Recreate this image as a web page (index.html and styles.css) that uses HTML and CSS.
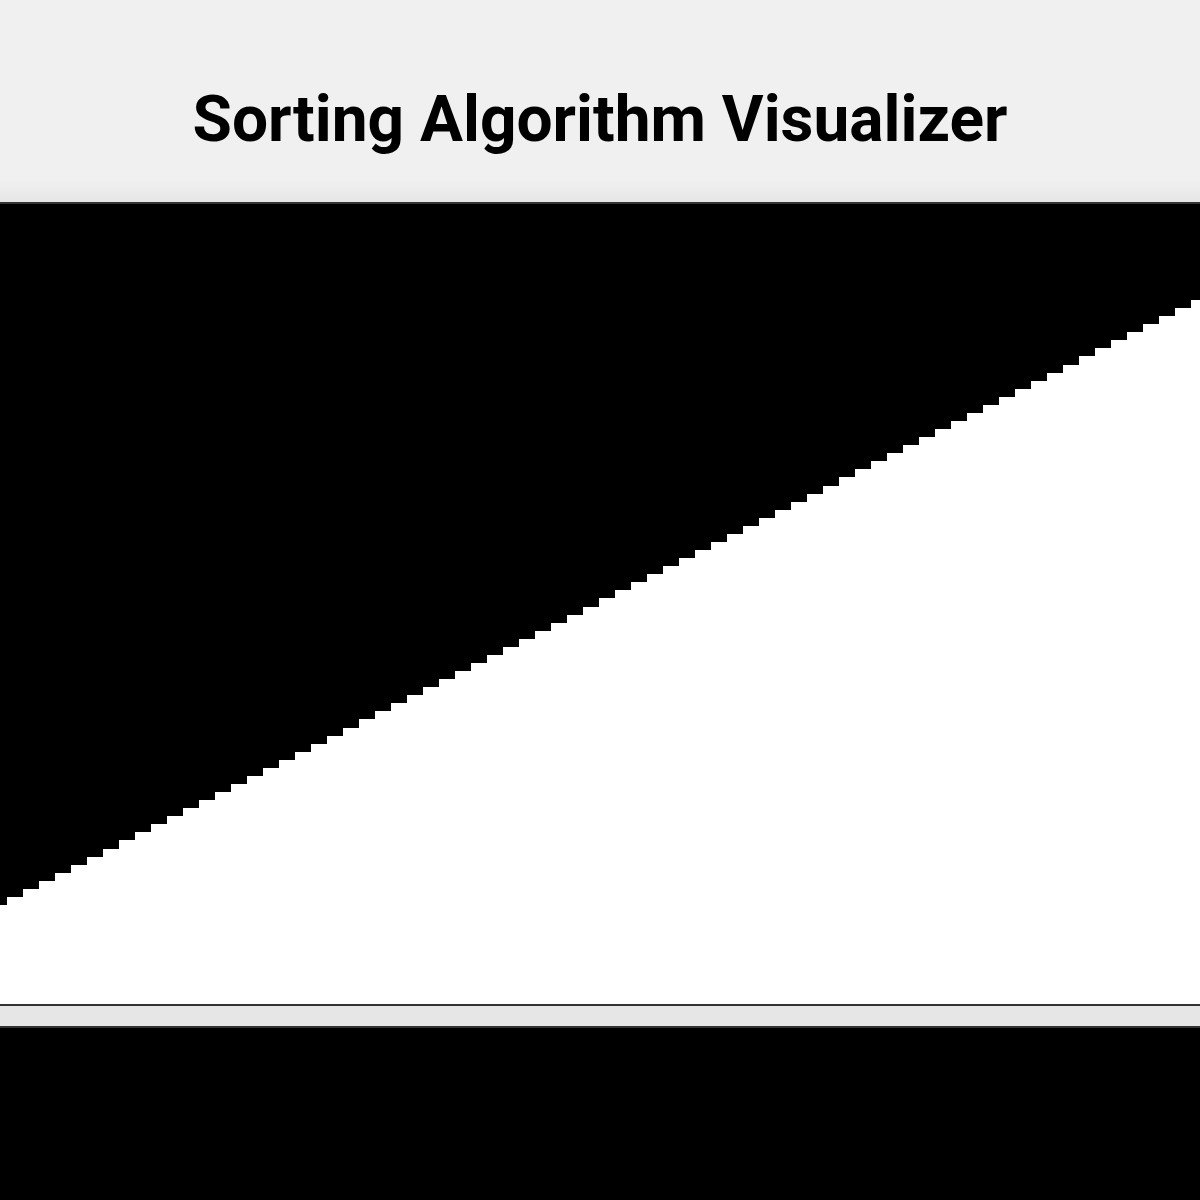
FILE: index.html
```html
<!DOCTYPE html>
<html lang="en">
<head>
<meta charset="utf-8">
<title>Sorting Algorithm Visualizer</title>
<link rel="stylesheet" href="styles.css">
</head>
<body>
<header class="header">
  <h1 class="title">Sorting Algorithm Visualizer</h1>
</header>
<main class="stage">
  <div class="bars">
    <div class="bar" style="height:99px"></div>
    <div class="bar" style="height:107px"></div>
    <div class="bar" style="height:115px"></div>
    <div class="bar" style="height:123px"></div>
    <div class="bar" style="height:131px"></div>
    <div class="bar" style="height:139px"></div>
    <div class="bar" style="height:147px"></div>
    <div class="bar" style="height:155px"></div>
    <div class="bar" style="height:164px"></div>
    <div class="bar" style="height:172px"></div>
    <div class="bar" style="height:180px"></div>
    <div class="bar" style="height:188px"></div>
    <div class="bar" style="height:196px"></div>
    <div class="bar" style="height:204px"></div>
    <div class="bar" style="height:212px"></div>
    <div class="bar" style="height:220px"></div>
    <div class="bar" style="height:228px"></div>
    <div class="bar" style="height:236px"></div>
    <div class="bar" style="height:244px"></div>
    <div class="bar" style="height:252px"></div>
    <div class="bar" style="height:260px"></div>
    <div class="bar" style="height:268px"></div>
    <div class="bar" style="height:276px"></div>
    <div class="bar" style="height:285px"></div>
    <div class="bar" style="height:293px"></div>
    <div class="bar" style="height:301px"></div>
    <div class="bar" style="height:309px"></div>
    <div class="bar" style="height:317px"></div>
    <div class="bar" style="height:325px"></div>
    <div class="bar" style="height:333px"></div>
    <div class="bar" style="height:341px"></div>
    <div class="bar" style="height:349px"></div>
    <div class="bar" style="height:357px"></div>
    <div class="bar" style="height:365px"></div>
    <div class="bar" style="height:373px"></div>
    <div class="bar" style="height:381px"></div>
    <div class="bar" style="height:389px"></div>
    <div class="bar" style="height:397px"></div>
    <div class="bar" style="height:406px"></div>
    <div class="bar" style="height:414px"></div>
    <div class="bar" style="height:422px"></div>
    <div class="bar" style="height:430px"></div>
    <div class="bar" style="height:438px"></div>
    <div class="bar" style="height:446px"></div>
    <div class="bar" style="height:454px"></div>
    <div class="bar" style="height:462px"></div>
    <div class="bar" style="height:470px"></div>
    <div class="bar" style="height:478px"></div>
    <div class="bar" style="height:486px"></div>
    <div class="bar" style="height:494px"></div>
    <div class="bar" style="height:502px"></div>
    <div class="bar" style="height:510px"></div>
    <div class="bar" style="height:518px"></div>
    <div class="bar" style="height:527px"></div>
    <div class="bar" style="height:535px"></div>
    <div class="bar" style="height:543px"></div>
    <div class="bar" style="height:551px"></div>
    <div class="bar" style="height:559px"></div>
    <div class="bar" style="height:567px"></div>
    <div class="bar" style="height:575px"></div>
    <div class="bar" style="height:583px"></div>
    <div class="bar" style="height:591px"></div>
    <div class="bar" style="height:599px"></div>
    <div class="bar" style="height:607px"></div>
    <div class="bar" style="height:615px"></div>
    <div class="bar" style="height:623px"></div>
    <div class="bar" style="height:631px"></div>
    <div class="bar" style="height:639px"></div>
    <div class="bar" style="height:648px"></div>
    <div class="bar" style="height:656px"></div>
    <div class="bar" style="height:664px"></div>
    <div class="bar" style="height:672px"></div>
    <div class="bar" style="height:680px"></div>
    <div class="bar" style="height:688px"></div>
    <div class="bar" style="height:696px"></div>
    <div class="bar" style="height:704px"></div>
  </div>
</main>
<div class="gap"></div>
<section class="panel"></section>
</body>
</html>
```

FILE: styles.css
```css
html, body {
  margin: 0;
  padding: 0;
}

body {
  background: #000;
  font-family: Roboto, "Liberation Sans", Arial, sans-serif;
  overflow: hidden;
}

.header {
  background: linear-gradient(to bottom, #f0f0f0 0, #f0f0f0 180px, #e6e6e6 202px);
  height: 202px;
  box-sizing: border-box;
  padding-top: 88px;
}

.title {
  margin: 0;
  text-align: center;
  font-size: 64px;
  line-height: 1;
  font-weight: 700;
  color: #000;
}

.stage {
  border-top: 2px solid #333;
  border-bottom: 2px solid #333;
  background: #000;
  height: 800px;
  overflow: hidden;
}

.bars {
  display: flex;
  align-items: flex-end;
  height: 100%;
  margin-left: -9px;
}

.bar {
  flex: 0 0 16px;
  width: 16px;
  background: #fff;
}

.gap {
  height: 20px;
  background: #e6e6e6;
}

.panel {
  border-top: 2px solid #333;
  background: #000;
  height: 170px;
}
```
